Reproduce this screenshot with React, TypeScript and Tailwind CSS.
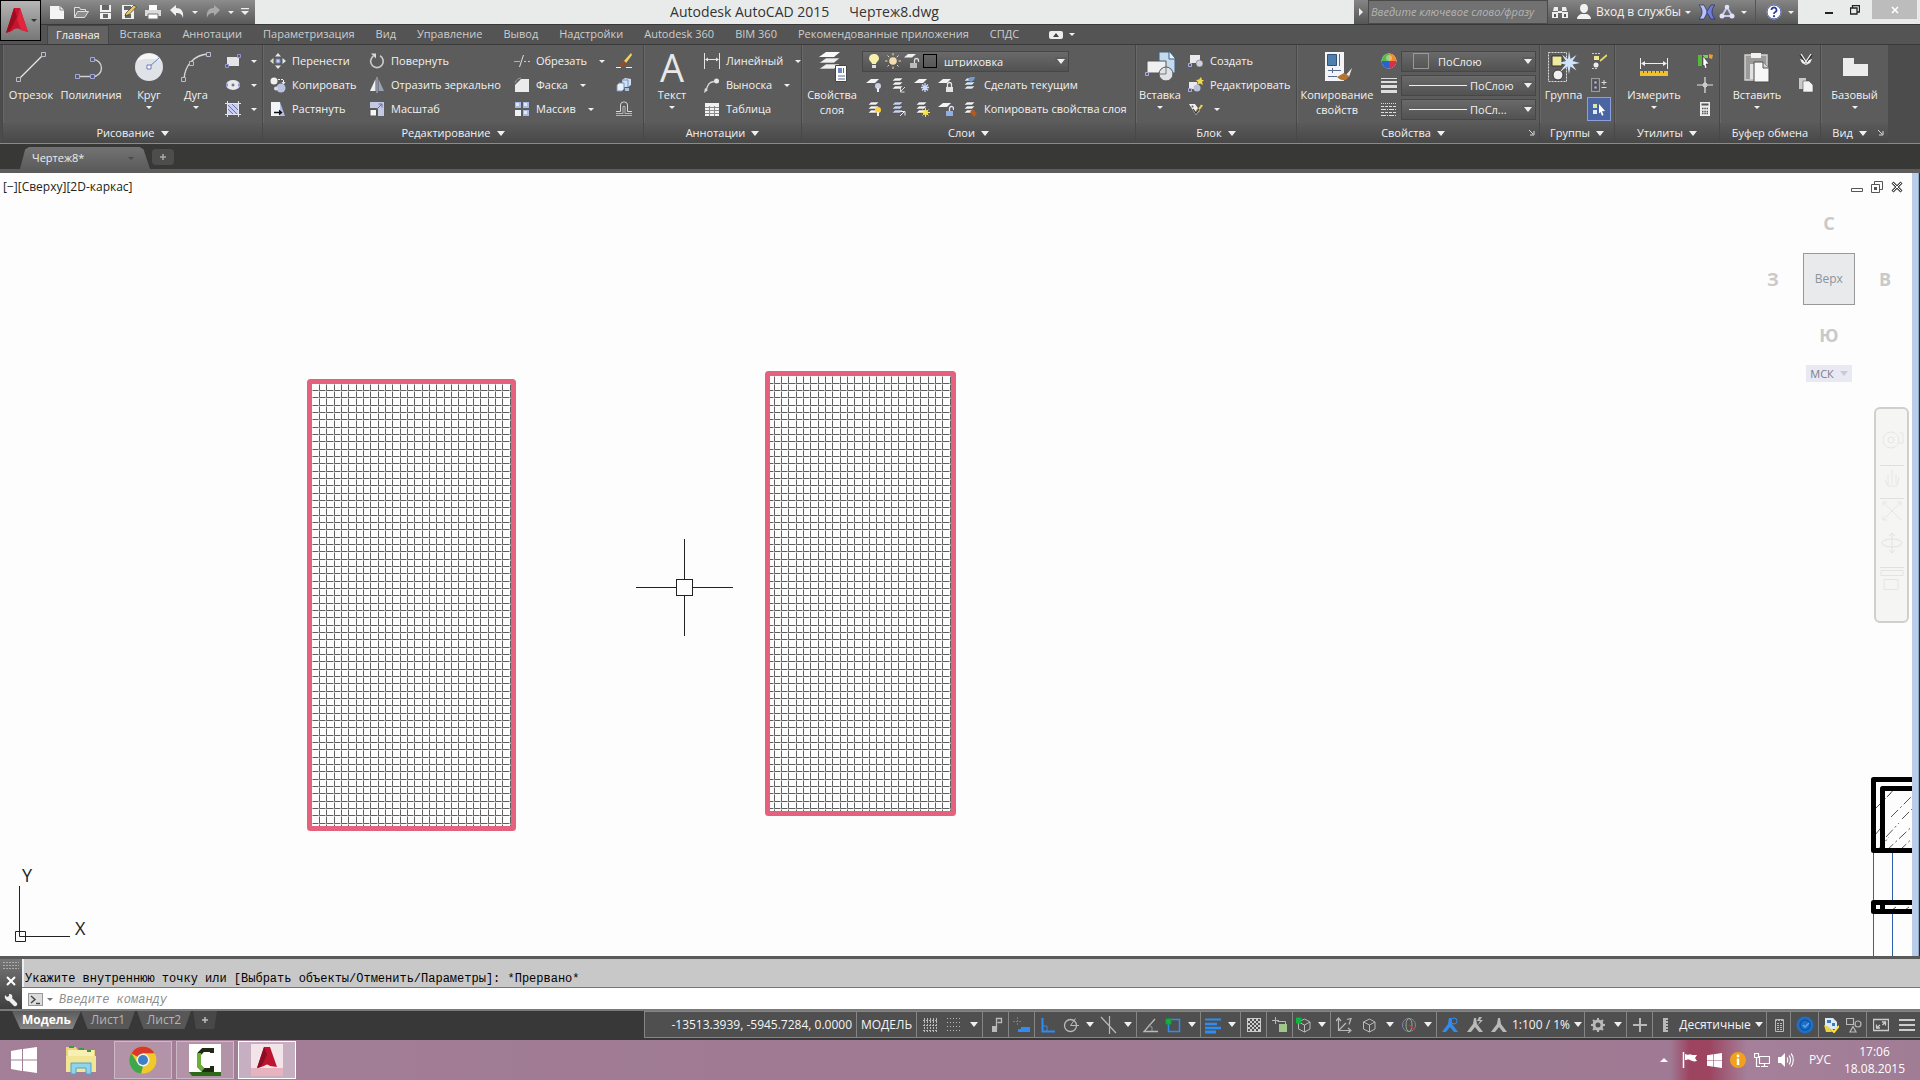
import { type ReactNode } from 'react';

/* ---------- small helpers ---------- */

function Svg({ s = 16, vb, children, className = '' }: { s?: number; vb?: string; children: ReactNode; className?: string }) {
  return (
    <svg width={s} height={s} viewBox={vb || `0 0 ${s} ${s}`} fill="none" className={`shrink-0 ${className}`} aria-hidden="true">
      {children}
    </svg>
  );
}

function Caret({ big = false, color = '#f0f0f0' }: { big?: boolean; color?: string }) {
  return big ? (
    <svg width="8" height="5" viewBox="0 0 8 5" className="shrink-0" aria-hidden="true"><path d="M0 0h8L4 5z" fill={color} /></svg>
  ) : (
    <svg width="6" height="3" viewBox="0 0 6 3" className="shrink-0" aria-hidden="true"><path d="M0 0h6L3 3z" fill={color} /></svg>
  );
}

function BigButton({ label, icon, width, arrow }: { label: string; icon: ReactNode; width: string; arrow?: boolean }) {
  return (
    <button className={`flex shrink-0 flex-col items-center ${width}`}>
      <span className="flex h-9 items-center">{icon}</span>
      <span className="mt-0.5 whitespace-pre-line text-center leading-[15px]">{label}</span>
      {arrow && <span className="mt-1 flex"><Caret /></span>}
    </button>
  );
}

function Tool({ icon, label, arrow }: { icon: ReactNode; label?: string; arrow?: boolean }) {
  return (
    <button className="flex h-6 items-center whitespace-nowrap">
      <span className="flex w-6 shrink-0 justify-center">{icon}</span>
      {label && <span className="ml-0.5">{label}</span>}
      {arrow && <span className={label ? 'ml-3' : 'ml-1.5'}><Caret /></span>}
    </button>
  );
}

function Panel({ title, width, arrow = true, corner, children }: { title: string; width: string; arrow?: boolean; corner?: boolean; children: ReactNode }) {
  return (
    <section className={`flex shrink-0 flex-col border-l border-[#484848] bg-[#5c5c5c] shadow-[inset_1px_0_0_#686868] ${width}`}>
      <div className="flex flex-1 pt-1">{children}</div>
      <div className="flex h-5 items-center bg-linear-to-b from-[#5a5a5a] to-[#484848]">
        <button className="flex flex-1 items-center justify-center gap-1.5 whitespace-nowrap">
          {title}
          {arrow && <Caret big />}
        </button>
        {corner && (
          <button aria-label={`${title}: параметры`} className="pr-1">
            <Svg s={6}><path d="M0 0l4 4M5 1v4H1" stroke="#ddd" /></Svg>
          </button>
        )}
      </div>
    </section>
  );
}

/* ---------- drawing panel ---------- */

const Line32 = (
  <Svg s={32}>
    <path d="M4 28L27 5" stroke="#e6e6e6" strokeWidth="1.3" />
    <path d="M1.500 26.500h4v4h-4zM26.500 1.500h4v4h-4z" fill="#5c5c5c" stroke="#b9bccb" />
  </Svg>
);
const Pline32 = (
  <Svg s={32}>
    <path d="M3 25.500h15a8.500 8.500 0 0 0 0-17h-1" stroke="#cfcfcf" strokeWidth="1.400" />
    <path d="M.5 23.500h4v4h-4zM15.500 23.500h4v4h-4zM15.500 6.500h4v4h-4z" fill="#5c5c5c" stroke="#a3a6dd" />
  </Svg>
);
const Circle32 = (
  <Svg s={32}>
    <circle cx="16" cy="16" r="14" fill="#dfe2e6" />
    <path d="M4 10a13.500 13.500 0 0 1 24 0c-7-3-16-3-24 0z" fill="#f6f6f6" />
    <path d="M16 16l10-9" stroke="#6a80c0" />
    <path d="M14 14h4v4h-4z" fill="#fff" stroke="#6a78c0" />
  </Svg>
);
const Arc32 = (
  <Svg s={32}>
    <path d="M4 28C5 14 14 4 28 3" stroke="#d8d8d8" strokeWidth="1.400" />
    <path d="M1.500 26.500h4v4h-4zM9.500 10.500h4v4h-4zM26.500 1.500h4v4h-4z" fill="#5c5c5c" stroke="#b9bccb" />
  </Svg>
);
const Rect16 = (
  <Svg>
    <path d="M2 4h12v9H2z" fill="#e4e4e8" />
    <path d="M.5 11.500h3v3h-3zM12.500 1.500h3v3h-3z" fill="#5c5c5c" stroke="#8f94e0" />
  </Svg>
);
const Ellipse16 = (
  <Svg>
    <ellipse cx="8" cy="8" rx="7" ry="5" fill="#e6e8ee" />
    <path d="M6.500 8h3M8 6.500v3" stroke="#555" />
    <path d="M1 6.500h2v3H1zM13 6.500h2v3h-2z" fill="#8f94e0" />
  </Svg>
);
const Hatch16 = (
  <Svg>
    <path d="M3 3h10v10H3z" fill="#c9cdf2" />
    <path d="M3 8l5 5M3 4l9 9M7 3l6 6" stroke="#6a70b8" />
    <path d="M2.500 0v16M13.500 0v16M0 2.500h16M0 13.500h16" stroke="#e4e4ee" />
  </Svg>
);

/* ---------- modify panel ---------- */

const Move16 = (
  <Svg>
    <path d="M8 0l3 3.500H5zM8 16l-3-3.500h6zM0 8l3.500-3v6zM16 8l-3.500 3V5z" fill="#e9e9e9" />
    <path d="M6 6h4v4H6z" fill="#c7d4ee" stroke="#6f7fb8" />
    <path d="M1 7h2v2H1z" fill="#d9e07c" />
  </Svg>
);
const Copy16 = (
  <Svg>
    <circle cx="4" cy="4" r="3.500" fill="#f0f0f0" />
    <circle cx="11" cy="11" r="4.500" fill="#b9c2e2" />
    <circle cx="6" cy="11.500" r="2" fill="#d7dbea" />
    <path d="M8 2.500h5.500v3" stroke="#eee" strokeDasharray="2 1" />
    <path d="M11.500 5h4l-2 2.500z" fill="#eee" />
  </Svg>
);
const Stretch16 = (
  <Svg>
    <path d="M1 1h9v14H1z" fill="#f2f4f8" />
    <path d="M10 1l5 14h-5z" fill="#aebfe0" />
    <path d="M4 11.500h6" stroke="#111" strokeWidth="1.500" />
    <path d="M9 8.500l3.500 3L9 14.500z" fill="#111" />
  </Svg>
);
const Rotate16 = (
  <Svg>
    <path d="M11 2.800A6.300 6.300 0 1 1 4.500 3" stroke="#c9c9c9" strokeWidth="1.700" />
    <path d="M2 .5h5v5z" fill="#d9d9d9" />
  </Svg>
);
const Mirror16 = (
  <Svg>
    <path d="M6.500 2v12H1z" fill="#f0f0f0" />
    <path d="M9.500 2v12H15z" fill="#9aa2b4" />
    <path d="M8 0v16" stroke="#b8c0dd" />
  </Svg>
);
const Scale16 = (
  <Svg>
    <path d="M1 1h14v14H9V7H1z" fill="#c3c8e4" />
    <path d="M1 8.500h6.500V15H1z" fill="#f5f5f5" stroke="#555" />
    <path d="M8 8l5-5M9.500 3H13v3.500" stroke="#6670a0" />
  </Svg>
);
const Trim16 = (
  <Svg>
    <path d="M0 8.500h6" stroke="#9db2dd" />
    <path d="M5.500 14l4-12" stroke="#e0e0e0" />
    <path d="M10 8.500h6" stroke="#ccc" strokeDasharray="2 2" />
  </Svg>
);
const Chamfer16 = (
  <Svg>
    <path d="M1 15V8l6-6h8v13z" fill="#ebebeb" />
    <path d="M1 6c1-3 3-5 6-5" stroke="#999" />
  </Svg>
);
const Array16 = (
  <Svg>
    <path d="M1 9h6v6H1z" fill="#eef1f8" />
    <path d="M1 1h6v6H1zM9 1h6v6H9zM9 9h6v6H9z" fill="#a9bbe4" />
    <path d="M2 2h3v3H2zM10 2h3v3h-3zM10 10h3v3h-3z" fill="#dfe8fa" />
  </Svg>
);
const Brush16 = (
  <Svg>
    <path d="M15 0L8 8l2 2 6-8z" fill="#f2d468" />
    <path d="M8 8l2 2c-1 3-4 4-7 3 2-1 2-4 5-5z" fill="#a34a1c" />
    <path d="M0 14.500h5M10 14.500h6" stroke="#eee" />
  </Svg>
);
const Explode16 = (
  <Svg>
    <path d="M6 3l3-2 6 1v6l-3 2H7z" fill="#cfe0f4" />
    <path d="M6 3h6v7" stroke="#7a93b8" />
    <path d="M1 8l2-2h5v6l-2 2H1z" fill="#e9f0fa" stroke="#7a93b8" />
    <path d="M9 11h4v3H9z" fill="#a9c2e4" />
  </Svg>
);
const Offset16 = (
  <Svg>
    <path d="M0 10.500h4.500V4a3 3 0 0 1 3-3h1a3 3 0 0 1 3 3v6.500H16" stroke="#d8d8d8" />
    <path d="M0 14.500h16M0 12.500h7V5.500h2v7h7" stroke="#b4b4bc" />
  </Svg>
);

/* ---------- annotation panel ---------- */

const Dim16 = <Svg><path d="M.5 0v16M15.500 0v16M2 6.500h12" stroke="#e4e4e4" /><path d="M1 6.500l3-2v4zM15 6.500l-3-2v4z" fill="#e4e4e4" /></Svg>;
const Leader16 = (
  <Svg>
    <path d="M2 14C4 6 6 5 10 4.500" stroke="#d5d5d5" strokeWidth="1.300" />
    <circle cx="12.500" cy="4" r="2.500" fill="#e8e8e8" />
    <path d="M0 16l1-5 3 2z" fill="#ddd" />
  </Svg>
);
const Table16 = (
  <Svg>
    <path d="M1 2h14v13H1z" fill="#f1f1f1" />
    <path d="M1 6.500h14M1 9.500h14M1 12.500h14M5.500 5v10M10.500 5v10" stroke="#8a8a8a" />
  </Svg>
);

/* ---------- layers ---------- */

function Sheets({ tint = '#f3f3f3', children }: { tint?: string; children?: ReactNode }) {
  return (
    <Svg>
      <path d="M5 1h8l-3 3H2zM5 5h8l-3 3H2zM5 9h8l-3 3H2z" fill={tint} stroke="#474747" strokeWidth=".5" />
      {children}
    </Svg>
  );
}
function Sheet({ children }: { children?: ReactNode }) {
  return <Svg><path d="M5 2h8l-4 4H0z" fill="#f3f3f3" />{children}</Svg>;
}
const LayerProps32 = (
  <Svg s={32}>
    <path d="M10 1h14l-6 5H3z" fill="#fafafa" />
    <path d="M10 7h14l-6 5H3zM10 13h14l-6 5H3z" fill="#f0f0f0" stroke="#555" strokeWidth=".6" />
    <path d="M19.500 14.500h11v16h-11z" fill="#fff" stroke="#444" />
    <path d="M22 17h4v5h-4z" fill="#6f86bd" />
    <path d="M27.500 17v5M22 25h7M22 28h7" stroke="#5a6a99" />
  </Svg>
);
const LayOff = <Sheet><circle cx="12" cy="9" r="3" fill="#c9cfe6" /><path d="M12 11v4" stroke="#eee" strokeWidth="2" /></Sheet>;
const LayIso = <Sheets><path d="M15 10l-4 4M10.500 11v4h4" stroke="#ddd" /></Sheets>;
const LayFrz = <Sheet><path d="M11 6v9M7 10.500h8M8 7.500l6 6M14 7.500l-6 6" stroke="#c9dcff" strokeWidth="1.300" /></Sheet>;
const LayLock = <Sheet><path d="M8 10h7v5H8z" fill="#e4e4e4" /><path d="M9.500 10V7.500a2 2 0 0 1 4 0V10" stroke="#e4e4e4" strokeWidth="1.300" /></Sheet>;
const LayCur = <Sheets tint="#dbe8f5"><path d="M8 0l5 0-1 3-3 2-3-2z" fill="#6f9ccf" /></Sheets>;
const LayOn = <Sheets><circle cx="12" cy="9" r="3" fill="#ffd23c" /><path d="M12 11v4" stroke="#eee" strokeWidth="2" /></Sheets>;
const LayUniso = <Sheets tint="#c8d4ec"><path d="M10 15l4-4M11 10.500h4v4" stroke="#eee" /></Sheets>;
const LayThaw = <Sheets><circle cx="11.500" cy="11.500" r="2.500" fill="#fff04a" /><path d="M11.500 7v9M7 11.500h9M8.500 8.500l6 6M14.500 8.500l-6 6" stroke="#f5e648" /></Sheets>;
const LayUnlock = <Sheet><path d="M8 10h7v5H8z" fill="#8fb0e4" /><path d="M11.500 10V7.500a2 2 0 0 1 4 0V9" stroke="#dce6f8" strokeWidth="1.300" /></Sheet>;
const LayMatch = <Sheets><path d="M8 11l3-3 4 5-3 3z" fill="#b4591f" /></Sheets>;

/* ---------- block, properties, groups, utils, clipboard ---------- */

const Insert32 = (
  <Svg s={32}>
    <path d="M15 1h11l5 6v15H15z" fill="#c3dbef" stroke="#3c5f80" />
    <path d="M25 1v7h6" fill="#eaf4fc" stroke="#3c5f80" />
    <path d="M3 10h19v12H3z" fill="#f0f0f3" stroke="#555" />
    <circle cx="22" cy="23" r="7" fill="#e0e2e6" stroke="#555" />
    <path d="M22 16v7h-7" stroke="#777" />
    <path d="M1.500 21.500h3v3h-3z" fill="#5c5c5c" stroke="#a9adea" />
  </Svg>
);
const BlockNew = (
  <Svg>
    <path d="M2 2h10v8H2z" fill="#e9e9ee" />
    <circle cx="11.500" cy="10.500" r="3.500" fill="#cfd2dc" stroke="#555" strokeWidth=".5" />
    <path d="M.5 10.500h3v3h-3z" stroke="#a9adea" />
  </Svg>
);
const BlockEdit = (
  <Svg>
    <path d="M1 5h8v7H1z" fill="#e9e9ee" />
    <circle cx="9" cy="11" r="3.500" fill="#b9c2dc" />
    <path d="M.5 11.500h3v3h-3z" stroke="#a9adea" />
    <path d="M13 0l1 3h2l-2 2 1 3-3-1.500L9 8l1-3-2-2 3-.5z" fill="#f0d84e" />
  </Svg>
);
const Attr16 = (
  <Svg>
    <path d="M1 3l6 0 5 7-4 4z" fill="#efefef" />
    <circle cx="4.500" cy="5.500" r="1" fill="#555" />
    <path d="M7 12l6-9 2.500 1.500L9 13z" fill="#e6cf6a" stroke="#444" strokeWidth=".6" />
    <path d="M5 8l3 4 3-4" stroke="#333" strokeWidth="1.200" />
  </Svg>
);
const Match32 = (
  <Svg s={32}>
    <path d="M4 1h19v29H4z" fill="#f3f4f7" />
    <path d="M6.500 3.500h9v11h-9z" fill="#4f7fae" stroke="#2f5276" />
    <path d="M18.500 3v12M7 19.500h13M7 25.500h9M11.500 17v5" stroke="#5a6a88" />
    <path d="M31 17l-6 7 3 2z" fill="#eee" />
    <path d="M16 26l7-4 5 3c-2 5-7 6-12 1z" fill="#b3752f" />
  </Svg>
);
const Wheel16 = (
  <Svg>
    <circle cx="8" cy="8" r="7.500" fill="#f3f3f3" />
    <path d="M8 8L8 .5A7.500 7.500 0 0 1 15.500 8z" fill="#f08a2e" />
    <path d="M8 8h7.500A7.500 7.500 0 0 1 8 15.500z" fill="#d6304a" />
    <path d="M8 8v7.500A7.500 7.500 0 0 1 .5 8z" fill="#2b62d0" />
    <path d="M8 8H.5A7.500 7.500 0 0 1 8 .5z" fill="#5cb84a" />
    <circle cx="8" cy="5" r="3" fill="#fff" opacity=".35" />
  </Svg>
);
const Weight16 = <Svg><path d="M0 1.500h16" stroke="#ddd" /><path d="M0 5h16" stroke="#ddd" strokeWidth="2" /><path d="M0 9.500h16M0 14.500h16" stroke="#ddd" strokeWidth="3" /></Svg>;
const Ltype16 = <Svg><path d="M0 2.500h16" stroke="#ddd" strokeDasharray="1 1" /><path d="M0 5.500h16M0 11.500h16" stroke="#ddd" strokeDasharray="3 1" /><path d="M0 8.500h16M0 14.500h16" stroke="#ddd" strokeDasharray="5 1 1 1" /></Svg>;
const Group32 = (
  <Svg s={32}>
    <path d="M.5 1.500h18v29H.5z" stroke="#ddd" strokeDasharray="2 1" />
    <path d="M4 5h10v10H4z" fill="#efeb9a" stroke="#333" />
    <circle cx="10" cy="24" r="5" fill="#f0f0f0" stroke="#333" />
    <path d="M13 20l5-6" stroke="#eee" />
    <path d="M21 0l1.500 8 6-4-4 6 8 2-8 1.500 4 6-6-4L21 23l-1.500-7.500-6 4 4-6L10 12l8-2-4-6 6 4z" fill="#cfe4fb" />
  </Svg>
);
const Ungroup16 = <Svg><path d="M1 .5h9M1 15.500h6" stroke="#ccc" strokeDasharray="2 1" /><path d="M3 3h5v4H3z" fill="#eee98f" /><circle cx="5" cy="12" r="2.500" fill="#eee" /><path d="M9 8l7-6" stroke="#e8d56a" strokeWidth="1.800" /></Svg>;
const GroupEdit16 = <Svg><path d="M.5 1.500h8v13h-8z" stroke="#ddd" strokeDasharray="1 1" /><path d="M3 4h3v3H3zM3 9h3v3H3z" fill="#b7b8f0" stroke="#333" strokeWidth=".6" /><path d="M13 3v5M10.500 5.500h5M10.500 10.500h5" stroke="#ddd" /></Svg>;
const GroupSel16 = <Svg><path d="M2 3h4v4H2z" fill="#d9e8a0" /><path d="M2 9h4v4H2z" fill="#dfe9ff" /><path d="M8 3l6 7-3 .2L12.500 14l-1.500.7L9.500 11 8 12.500z" fill="#fff" /></Svg>;
const Measure32 = (
  <Svg s={32}>
    <path d="M2.500 7v11M29.500 7v11M4 12.500h24" stroke="#eee" />
    <path d="M3 12.500l4-2.500v5zM29 12.500l-4-2.500v5z" fill="#eee" />
    <path d="M2 20h28v5H2z" fill="#efc12f" />
    <path d="M5.500 20v2M9.500 20v2M13.500 20v2M17.500 20v2M21.500 20v2M25.500 20v2" stroke="#7a5a00" />
  </Svg>
);
const QSel16 = <Svg><path d="M1 2h4v11H1z" fill="#58b83a" /><path d="M6 2h5v3H8v8H6z" fill="#7ccf58" /><path d="M12 1l4 1-1 4-3-1z" fill="#f59a2d" /><path d="M6 3l6 8H9l1 4-2 .5L7 12l-1 1z" fill="#fff" stroke="#222" strokeWidth=".5" /></Svg>;
const Point16 = <Svg><path d="M8 0v16M0 8h16" stroke="#e4e4e4" strokeWidth="1.200" /><circle cx="8" cy="8" r="2" stroke="#e4e4e4" /></Svg>;
const Calc16 = <Svg><path d="M3 1h10v14H3z" fill="#ececec" /><path d="M4.500 2.500h7v2h-7z" fill="#555" /><path d="M5 7.500h6M5 10.500h6M5 12.500h6" stroke="#555" strokeDasharray="1.500 .8" strokeWidth="1.500" /></Svg>;
const Paste32 = (
  <Svg s={32}>
    <path d="M4 4h22v25H4z" fill="#9b9a98" stroke="#d4d4d4" strokeWidth="1.400" />
    <path d="M10 2h10v5H10z" fill="#f1f1f1" />
    <path d="M9 13h9v15H9z" fill="#e2e2e2" />
    <path d="M13 11h9l6 6v14H13z" fill="#f7f7f7" stroke="#4a4a4a" />
    <path d="M22 11v6h6" fill="#d5d5d5" stroke="#555" />
  </Svg>
);
const Cut16 = <Svg><path d="M2 2l6 8 6-8" stroke="#2e2e2e" strokeWidth="1.400" /><path d="M2 6l3 1 3 4 3-4 3-1-2 4-4 2-4-2z" fill="#f2f2f2" /><path d="M3 1l6 9M13 1L7 10" stroke="#f2f2f2" strokeWidth="1.300" /></Svg>;
const CopyClip16 = <Svg><path d="M1 1h7v11H1z" fill="#c9c9c9" /><path d="M5 4h6l4 4v7H5z" fill="#f3f3f3" stroke="#555" strokeWidth=".6" /></Svg>;
const Base32 = <Svg s={32}><path d="M4 7h11v6h14v12H4z" fill="#ececec" /></Svg>;

/* ---------- title bar ---------- */

const tabs = ['Вставка', 'Аннотации', 'Параметризация', 'Вид', 'Управление', 'Вывод', 'Надстройки', 'Autodesk 360', 'BIM 360', 'Рекомендованные приложения', 'СПДС'];

const quick: { label: string; icon: ReactNode }[] = [
  { label: 'Новый', icon: <Svg><path d="M1 2h10l4 4v9H1z" fill="#f4f4f4" /><path d="M11 2v4h4" stroke="#888" /></Svg> },
  { label: 'Открыть', icon: <Svg><path d="M1.500 13V3.500h5l1 2h5V8" stroke="#e0e0e0" /><path d="M1.500 13.500l3-6h11l-4 6z" fill="#8d8d8d" stroke="#e0e0e0" /></Svg> },
  { label: 'Сохранить', icon: <Svg><path d="M3 1h11v14H3z" fill="#f1f1f1" /><path d="M5 1h7v5H5zM6 10h5v4H6z" fill="#666" /><path d="M3 8.500h11" stroke="#777" /></Svg> },
  { label: 'Сохранить как', icon: <Svg><path d="M1 1h12v14H1z" fill="#f1f1f1" /><path d="M3 2h7v4H3zM4 10h6v4H4z" fill="#666" /><path d="M5 9l8-8 2.500 2L8 10.500 4 12z" fill="#e9c75a" stroke="#333" strokeWidth=".7" /></Svg> },
  { label: 'Печать', icon: <Svg><path d="M4 1h8v5H4z" fill="#fff" /><path d="M0 6h16v6H0z" fill="#dcdcdc" /><path d="M3 10h10v5H3z" fill="#fff" stroke="#777" /></Svg> },
  { label: 'Отменить', icon: <Svg><path d="M1 6l6-5v3c5 0 8 3 7 10-1-4-3-5-7-5v3z" fill="#f0f0f0" /></Svg> },
];

function TitleBar() {
  return (
    <header className="flex h-11 shrink-0 bg-[#545454]">
      <button aria-label="Меню приложения" className="flex h-[41px] w-[41px] shrink-0 items-center border border-black bg-linear-to-b from-[#b5b5b5] to-[#777]">
        <svg width="28" height="28" viewBox="0 0 28 28" className="ml-0.5" aria-hidden="true">
          <path d="M11 1h6l8 24-7-2c-3-2-6-2-9 1l-6 2z" fill="#c8142c" />
          <path d="M11 1l-8 25 4-2 7-14z" fill="#9e0c20" />
          <path d="M17 1l8 24-7-2-4-11z" fill="#e0263c" />
        </svg>
        <Caret color="#333" />
      </button>
      <div className="flex min-w-0 flex-1 flex-col">
        <div className="flex h-6 bg-[#e9ebea]">
          <div className="flex w-[214px] shrink-0 items-center bg-linear-to-b from-[#8c8c8c] to-[#5a5a5a] pl-1">
            {quick.map((q) => (
              <button key={q.label} aria-label={q.label} className="flex w-6 justify-center">{q.icon}</button>
            ))}
            <button aria-label="Список отмены" className="flex w-3 justify-center"><Caret /></button>
            <button aria-label="Повторить" className="flex w-6 justify-center">
              <Svg><path d="M15 6L9 1v3C4 4 1 7 2 14c1-4 3-5 7-5v3z" fill="#a9a9a9" /></Svg>
            </button>
            <button aria-label="Список повтора" className="flex w-3 justify-center"><Caret /></button>
            <button aria-label="Настройка панели" className="flex w-4 justify-center">
              <Svg s={8}><path d="M0 .5h8" stroke="#eee" strokeWidth="1.500" /><path d="M0 3h8L4 7z" fill="#eee" /></Svg>
            </button>
          </div>
          <h1 className="flex min-w-0 flex-1 items-center justify-center gap-5 whitespace-nowrap text-sm text-[#333]">
            <span>Autodesk AutoCAD 2015</span>
            <span>Чертеж8.dwg</span>
          </h1>
          <div className="flex shrink-0 bg-linear-to-b from-[#858585] to-[#565656]">
            <button aria-label="Свернуть поиск" className="flex w-3.5 items-center justify-center">
              <Svg s={8}><path d="M2 0v8l4-4z" fill="#eee" /></Svg>
            </button>
            <input aria-label="Поиск" placeholder="Введите ключевое слово/фразу" className="w-[180px] border border-[#4a4a4a] bg-[#717171] px-0.5 text-[11px] italic placeholder:text-[#b4b4b4]" />
            <button aria-label="Найти" className="flex w-6 items-center justify-center">
              <Svg><path d="M2 3h4v4H1zM10 3h4l1 4h-5zM0 8h6v6H0zM10 8h6v6h-6z" fill="#eee" /><path d="M6 8h4" stroke="#eee" strokeWidth="2" /><path d="M2 10h2v3H2zM12 10h2v3h-2z" fill="#555" /></Svg>
            </button>
            <button className="flex items-center whitespace-nowrap text-[#f2f2f2]">
              <span className="flex w-6 justify-center">
                <Svg><path d="M8 0c3 0 4 2 4 4.500S10 9 8 9 4 7 4 4.500 5 0 8 0zM1 15c0-3 3-5 5-5h4c2 0 5 2 5 5z" fill="#f2f2f2" /></Svg>
              </span>
              <span className="mr-1">Вход в службы</span>
              <Caret />
            </button>
            <button aria-label="Exchange" className="ml-1 flex w-6 items-center justify-center">
              <Svg><path d="M0 1h5l3.500 7L5 15H0c4-4 4-10 0-14z" fill="#b9c3f5" stroke="#222a66" strokeWidth=".7" /><path d="M16 1h-4L7.500 8l4.500 7h4c-4-4-4-10 0-14z" fill="#6f7fd8" stroke="#222a66" strokeWidth=".7" /></Svg>
            </button>
            <button aria-label="Autodesk 360" className="flex items-center">
              <Svg><path d="M8 3l5 9H3z" stroke="#c5c9ef" strokeWidth="2" /><circle cx="8" cy="3" r="2.300" fill="#dfe2fa" /><circle cx="3" cy="12" r="2.500" fill="#dfe2fa" /><circle cx="13" cy="12" r="2.500" fill="#dfe2fa" /></Svg>
              <span className="ml-1.5"><Caret /></span>
            </button>
            <button aria-label="Справка" className="ml-2 flex items-center border-l border-[#555] pl-2.5 pr-1">
              <Svg><circle cx="8" cy="8" r="7.500" fill="#fff" /><circle cx="8" cy="8" r="7" stroke="#3a4da0" /><path d="M5.500 6a2.500 2.500 0 1 1 3.500 2.300c-.8.400-1 .7-1 1.700" stroke="#2b3f9c" strokeWidth="1.800" /><circle cx="8" cy="12.200" r="1.100" fill="#2b3f9c" /></Svg>
              <span className="ml-1.5"><Caret /></span>
            </button>
          </div>
          <div className="flex w-[122px] shrink-0">
            <button aria-label="Свернуть" className="flex flex-1 items-center justify-end pr-1"><Svg s={8}><path d="M0 5h8" stroke="#222" strokeWidth="2" /></Svg></button>
            <button aria-label="Восстановить" className="flex flex-1 items-center justify-center pb-1"><Svg s={10}><path d="M.5 3h6.500v6H.5zM2.500 3V.500h7v6.500H7" stroke="#222" strokeWidth="1.300" /></Svg></button>
            <button aria-label="Закрыть" className="mr-[3px] flex h-[19px] w-[45px] items-center justify-center bg-[#bcbcbc]"><Svg s={8}><path d="M1 1l6 6M7 1L1 7" stroke="#fff" strokeWidth="1.600" /></Svg></button>
          </div>
        </div>
        <nav className="flex h-5 items-stretch whitespace-nowrap border-t border-[#383838] bg-[#545454] pl-1.5 text-[11px] text-[#cdcdcd]">
          <button className="border border-b-0 border-[#454545] bg-[#626262] px-2 text-[#f2f2f2]">Главная</button>
          {tabs.map((t) => (
            <button key={t} className="ml-px px-2.5">{t}</button>
          ))}
          <button aria-label="Свернуть ленту" className="ml-5 flex items-center gap-1.5">
            <Svg s={14}><rect y="3" width="14" height="8" rx="2" fill="#eee" /><path d="M4 9l3-4 3 4z" fill="#444" /></Svg>
            <Caret />
          </button>
        </nav>
      </div>
    </header>
  );
}

/* ---------- ribbon ---------- */

const selectBox = 'h-[21px] w-full cursor-default appearance-none border border-[#474747] bg-linear-to-b from-[#6a6a6a] to-[#525252] leading-none';

function PropSelect({ label, value, line }: { label: string; value: string; line?: boolean }) {
  return (
    <div className="relative flex h-6 items-center">
      <select aria-label={label} className={`${selectBox} ${line ? 'pl-[68px]' : 'pl-9'}`}>
        <option>{value}</option>
      </select>
      {line ? (
        <span className="pointer-events-none absolute left-2 h-px w-[58px] bg-[#eee]" />
      ) : (
        <span className="pointer-events-none absolute left-3 size-4 border border-[#999]" />
      )}
      <span className="pointer-events-none absolute right-0.5 flex items-center bg-[#5c5c5c] p-0.5"><Caret big /></span>
    </div>
  );
}

function Ribbon() {
  return (
    <div className="flex h-[100px] shrink-0 border-b border-[#8a8a8a] border-t border-t-[#3a3a3a] bg-[#4c4c4c] pl-0.5 text-[11px] text-[#f2f2f2]">
      <Panel title="Рисование" width="w-[260px]">
        <BigButton label="Отрезок" width="w-14" icon={Line32} />
        <BigButton label="Полилиния" width="w-16" icon={Pline32} />
        <BigButton label="Круг" width="w-[52px]" icon={Circle32} arrow />
        <BigButton label="Дуга" width="w-[42px]" icon={Arc32} arrow />
        <div className="ml-1">
          <Tool icon={Rect16} arrow />
          <Tool icon={Ellipse16} arrow />
          <Tool icon={Hatch16} arrow />
        </div>
      </Panel>
      <Panel title="Редактирование" width="w-[381px]">
        <div className="ml-[3px] w-[99px]">
          <Tool icon={Move16} label="Перенести" />
          <Tool icon={Copy16} label="Копировать" />
          <Tool icon={Stretch16} label="Растянуть" />
        </div>
        <div className="w-[145px]">
          <Tool icon={Rotate16} label="Повернуть" />
          <Tool icon={Mirror16} label="Отразить зеркально" />
          <Tool icon={Scale16} label="Масштаб" />
        </div>
        <div className="w-[102px]">
          <Tool icon={Trim16} label="Обрезать" arrow />
          <Tool icon={Chamfer16} label="Фаска" arrow />
          <Tool icon={Array16} label="Массив" arrow />
        </div>
        <div>
          <Tool icon={Brush16} />
          <Tool icon={Explode16} />
          <Tool icon={Offset16} />
        </div>
      </Panel>
      <Panel title="Аннотации" width="w-[158px]">
        <BigButton
          label="Текст"
          width="w-[56px]"
          arrow
          icon={<span aria-hidden="true" className="text-[38px] leading-9 text-[#e8e8e8]">A</span>}
        />
        <div>
          <Tool icon={Dim16} label="Линейный" arrow />
          <Tool icon={Leader16} label="Выноска" arrow />
          <Tool icon={Table16} label="Таблица" />
        </div>
      </Panel>
      <Panel title="Слои" width="w-[334px]">
        <BigButton label={'Свойства\nслоя'} width="w-[60px]" icon={LayerProps32} />
        <div>
          <div className="relative flex h-6 w-[207px] items-center">
            <select aria-label="Слой" className={`${selectBox} pl-[81px]`}>
              <option>штриховка</option>
            </select>
            <span className="pointer-events-none absolute left-1 flex items-center gap-[3px]">
              <Svg><path d="M8 1c3 0 5 2 5 4.500S10 9 10 11H6C6 9 3 8 3 5.500S5 1 8 1z" fill="#f6f0a8" /><path d="M6 12h4v3H6z" fill="#ddd" /></Svg>
              <Svg><circle cx="8" cy="8" r="3.800" fill="#f1ddb0" /><path d="M8 0v16M0 8h16M2.500 2.500l11 11M13.500 2.500l-11 11" stroke="#e8d9b8" strokeDasharray="2.500 11" /></Svg>
              <Svg><path d="M4 1h8L8 4.500H0z" fill="#f2f2f2" /><path d="M6 10h7v5H6z" fill="#bbb" /><path d="M10.500 10V7.500a2 2 0 0 1 4 0V9" stroke="#ddd" strokeWidth="1.300" /></Svg>
              <span className="size-3.5 border border-black" />
            </span>
            <span className="pointer-events-none absolute right-0.5 flex items-center bg-[#5c5c5c] p-0.5"><Caret big /></span>
          </div>
          <div className="flex">
            <Tool icon={LayOff} /><Tool icon={LayIso} /><Tool icon={LayFrz} /><Tool icon={LayLock} />
            <Tool icon={LayCur} label="Сделать текущим" />
          </div>
          <div className="flex">
            <Tool icon={LayOn} /><Tool icon={LayUniso} /><Tool icon={LayThaw} /><Tool icon={LayUnlock} />
            <Tool icon={LayMatch} label="Копировать свойства слоя" />
          </div>
        </div>
      </Panel>
      <Panel title="Блок" width="w-[161px]">
        <BigButton label="Вставка" width="w-[48px]" icon={Insert32} arrow />
        <div>
          <Tool icon={BlockNew} label="Создать" />
          <Tool icon={BlockEdit} label="Редактировать" />
          <Tool icon={Attr16} arrow />
        </div>
      </Panel>
      <Panel title="Свойства" width="w-[243px]" corner>
        <BigButton label={'Копирование\nсвойств'} width="w-[80px]" icon={Match32} />
        <div>
          <Tool icon={Wheel16} />
          <Tool icon={Weight16} />
          <Tool icon={Ltype16} />
        </div>
        <div className="w-[135px]">
          <PropSelect label="Цвет" value="ПоСлою" />
          <PropSelect label="Вес линий" value="ПоСлою" line />
          <PropSelect label="Тип линий" value="ПоСл..." line />
        </div>
      </Panel>
      <Panel title="Группы" width="w-[75px]">
        <BigButton label="Группа" width="w-[47px]" icon={Group32} />
        <div>
          <Tool icon={Ungroup16} />
          <Tool icon={GroupEdit16} />
          <div className="border border-[#8ba0d8] bg-[#4a64a4] [&>button]:h-[22px] [&>button>span]:w-[22px]"><Tool icon={GroupSel16} /></div>
        </div>
      </Panel>
      <Panel title="Утилиты" width="w-[105px]">
        <BigButton label="Измерить" width="w-[78px]" icon={Measure32} arrow />
        <div>
          <Tool icon={QSel16} />
          <Tool icon={Point16} />
          <Tool icon={Calc16} />
        </div>
      </Panel>
      <Panel title="Буфер обмена" width="w-[101px]" arrow={false}>
        <BigButton label="Вставить" width="w-[74px]" icon={Paste32} arrow />
        <div>
          <Tool icon={Cut16} />
          <Tool icon={CopyClip16} />
        </div>
      </Panel>
      <Panel title="Вид" width="w-[68px]" corner>
        <BigButton label="Базовый" width="w-full" icon={Base32} arrow />
      </Panel>
    </div>
  );
}

/* ---------- drawing area ---------- */

const PITCH = 22 / 3;

// net hatch: every cell is an L with small gaps at the far ends
function hatchPath(x1: number, y1: number, x2: number, y2: number) {
  let d = '';
  const k0 = Math.floor((x1 - 319) / PITCH);
  const r0 = Math.floor((y1 - 217) / PITCH);
  for (let r = r0; 217 + r * PITCH < y2 + PITCH; r++) {
    const y = Math.round(217 + r * PITCH) + 0.5;
    const prev = Math.round(217 + (r - 1) * PITCH) + 0.5;
    for (let k = k0; 319 + k * PITCH < x2; k++) {
      const x = Math.round(319 + k * PITCH) + 0.5;
      const next = Math.round(319 + (k + 1) * PITCH) + 0.5;
      // no vertical right against the left border
      d += x < x1 + 2 ? `M${x} ${y}H${next - 1}` : `M${x} ${prev + 1}V${y}H${next - 1}`;
    }
  }
  return d;
}

const shapes = [
  { id: 'a', x: 307, y: 206, w: 209, h: 452 },
  { id: 'b', x: 765, y: 198, w: 191, h: 445 },
];

function Canvas() {
  return (
    <main className="relative min-h-0 flex-1 overflow-hidden border-r border-[#0d3a44] bg-[#fdfdfd]">
      <svg className="absolute inset-0 size-full" aria-hidden="true">
        {shapes.map((s) => (
          <g key={s.id}>
            <clipPath id={`clip-${s.id}`}>
              <rect x={s.x + 5} y={s.y + 5} width={s.w - 10} height={s.h - 10} />
            </clipPath>
            <path d={hatchPath(s.x + 5, s.y + 5, s.x + s.w - 5, s.y + s.h - 5)} fill="none" stroke="#5e5e5e" clipPath={`url(#clip-${s.id})`} />
            <rect x={s.x + 2.5} y={s.y + 2.5} width={s.w - 5} height={s.h - 5} rx="1" fill="none" stroke="#e4627d" strokeWidth="5" />
          </g>
        ))}
        {/* crosshair */}
        <path d="M636 414.500h40M693 414.500h40M684.500 366v40M684.500 423v40" stroke="#222" />
        <rect x="676.500" y="406.500" width="16" height="16" fill="none" stroke="#222" />
      </svg>

      {/* UCS icon */}
      <svg width="110" height="110" className="absolute bottom-0 left-0" aria-hidden="true">
        <path d="M19.500 40v46M25 90.500h45" stroke="#222" />
        <path d="M19.500 86v4.500H25M15.500 85.500h10v10h-10z" fill="none" stroke="#222" />
        <text x="22" y="36" fontSize="18" fill="#222" className="font-['Open_Sans',sans-serif]">Y</text>
        <text x="75" y="89" fontSize="18" fill="#222" className="font-['Open_Sans',sans-serif]">X</text>
      </svg>

      {/* part of the neighbouring plan */}
      <svg width="48" height="179" className="absolute bottom-0 right-0" aria-hidden="true">
        <path d="M16 20L26 9M4 32l16-16M4 58l10-12M15 60l13-14M31 42l10-10M6 74l12-14M15 74l34-32M28 74l21-20M20 40l28-28M38 74l10-9" stroke="#555" strokeDasharray="10 3 2 3" />
        <path d="M17 136l8-6M30 136l8-6M42 136l6-5" stroke="#555" />
        <path d="M50 2.500H2.500v71H50M50 11.500H11.500V73M50 125.500H2.500v9H50M11.500 125v10" fill="none" stroke="#000" strokeWidth="5" strokeLinejoin="round" />
        <path d="M2.500 76v47M21.500 76v47M2.500 137v42M21.500 137v42" stroke="#2f5fae" />
      </svg>

      <div className="absolute left-[3px] top-1.5 flex text-xs leading-4 text-[#222]">
        <button>[−]</button>
        <button>[Сверху]</button>
        <button>[2D-каркас]</button>
      </div>

      <div className="absolute right-4 top-2 flex gap-2">
        <button aria-label="Свернуть вид"><Svg s={12}><path d="M.5 7.500h11v3H.5z" stroke="#555" /></Svg></button>
        <button aria-label="Восстановить вид"><Svg s={12}><path d="M.5 3.500h8v8h-8zM3.500 3V.500h8v8H9" stroke="#555" /><path d="M3 6h3v3H3z" fill="#555" /></Svg></button>
        <button aria-label="Закрыть вид"><Svg s={12}><path d="M1.500 1.500l9 9M10.500 1.500l-9 9" stroke="#444" strokeWidth="3" /><path d="M2 2l8 8M10 2l-8 8" stroke="#fff" /></Svg></button>
      </div>

      {/* view cube */}
      <div className="absolute right-[26px] top-10 flex w-[128px] flex-col items-center leading-5 text-[#c9c9c9]">
        <button className="h-5 text-lg font-bold leading-5">С</button>
        <div className="mt-5 flex w-full items-center justify-between px-0.5">
          <button className="text-lg font-bold">З</button>
          <button className="size-[52px] border border-[#999] bg-[#e9eaec] text-xs text-[#8b949c]">Верх</button>
          <button className="text-lg font-bold">В</button>
        </div>
        <button className="mt-5 h-5 text-lg font-bold leading-5">Ю</button>
        <button className="mt-5 flex h-[17px] items-center gap-1.5 bg-[#e9e9f4] px-1 text-[11px] text-[#7c7c88]">
          МСК
          <Caret big color="#c9c9d6" />
        </button>
      </div>

      {/* navigation bar */}
      <div className="absolute right-2.5 top-[234px] flex h-[216px] w-[35px] flex-col items-center rounded-md border-2 border-[#cfcfcb] bg-[#f5f5f4] pt-5">
        <button aria-label="Штурвал"><Svg s={24}><circle cx="11" cy="11" r="8" stroke="#e6e6e6" /><circle cx="11" cy="11" r="3" stroke="#e6e6e6" /><path d="M19 4h4v10h-4" stroke="#e6e6e6" /></Svg></button>
        <button aria-label="Панорамирование" className="mt-3 border-t border-[#e0e0e0]"><Svg s={24}><path d="M8 20V8m4 10V4m4 14V8M5 14l3 6h9l2-9" stroke="#e6e6e6" /></Svg></button>
        <button aria-label="Зумирование" className="mt-2 border-t border-[#e0e0e0]"><Svg s={24}><path d="M3 3l18 18M21 3L3 21M3 7V3h4M21 7V3h-4M3 17v4h4" stroke="#e6e6e6" /></Svg></button>
        <button aria-label="Орбита" className="mt-2"><Svg s={24}><path d="M12 2v20M9 5l3-3 3 3M9 19l3 3 3-3" stroke="#e2e2e2" /><ellipse cx="12" cy="12" rx="10" ry="4" stroke="#e2e2e2" /></Svg></button>
        <button aria-label="Аниматор" className="mt-3 border-t border-[#e0e0e0]"><Svg s={24}><path d="M1 2.500h22v5H1zM4 11.500h14v10H4z" stroke="#e4e4e4" /></Svg></button>
      </div>

      <div className="absolute inset-y-0 right-0 w-[7px] border-r border-[#8fa9c4] bg-[#b9cdea]" />
    </main>
  );
}

/* ---------- command line ---------- */

function CommandLine() {
  return (
    <div className="flex h-[55px] shrink-0 border-b-2 border-t-[3px] border-b-[#7a7a7a] border-t-[#5a5a5a] bg-[#555]">
      <div className="flex w-[22px] shrink-0 flex-col items-center justify-between bg-linear-to-b from-[#777] to-[#3f3f3f] py-0.5">
        <svg width="16" height="8" className="shrink-0" aria-hidden="true"><path d="M0 1.500h16M0 4.500h16M0 7.500h16" stroke="#aaa" strokeDasharray="2 1" /></svg>
        <button aria-label="Закрыть строку"><Svg s={10}><path d="M1 1l8 8M9 1L1 9" stroke="#fff" strokeWidth="2" /></Svg></button>
        <button aria-label="Адаптация"><Svg s={14}><path d="M1 2l2 2 2-1V1c3 0 4 2 3 4l5 5c1 2-1 4-3 3L5 8C3 8 0 6 1 2z" fill="#eee" /></Svg></button>
      </div>
      <div className="flex min-w-0 flex-1 flex-col font-['Liberation_Mono',monospace] text-xs">
        <p className="h-7 whitespace-nowrap border-l-2 border-[#eee] bg-[#c8c8c8] pl-px pt-3 leading-4 text-black">
          Укажите внутреннюю точку или [Выбрать объекты/Отменить/Параметры]: *Прервано*
        </p>
        <div className="flex flex-1 items-center border-t border-[#777] bg-white pl-1.5 pt-0.5">
          <button aria-label="Последние команды" className="flex items-center gap-1">
            <Svg s={15}><rect x=".5" y="1.500" width="14" height="12" fill="#dcdcdc" stroke="#999" /><path d="M3 4l4 3.500L3 11M8 11.500h4" stroke="#444" strokeWidth="1.400" /></Svg>
            <Caret color="#777" />
          </button>
          <input aria-label="Команда" placeholder="Введите команду" className="ml-1.5 min-w-0 flex-1 italic outline-none placeholder:text-[#8e8e8e]" />
        </div>
      </div>
    </div>
  );
}

/* ---------- status bar ---------- */

function St({ label, w = 'w-[26px]', sep, children }: { label: string; w?: string; sep?: boolean; children: ReactNode }) {
  return (
    <button aria-label={label} className={`flex h-full shrink-0 items-center justify-center ${w} ${sep ? 'border-l border-[#858585]' : ''}`}>
      {children}
    </button>
  );
}
const Drop = () => <St label="Список" w="w-4"><Caret big /></St>;
const G = '#b9b9b9';
const B = '#2f8cf0';

const Person = ({ color, children }: { color: string; children?: ReactNode }) => (
  <Svg><path d="M7 1h2l1 6 6 8h-4l-4-5-4 5H0l6-8z" fill={color} />{children}</Svg>
);
const CubeIcon = ({ children }: { children?: ReactNode }) => (
  <Svg><path d="M2.500 5L8.500 2l5.500 3v7l-5.500 3-6-3zM2.500 5l6 3 5.500-3M8.500 8v7" stroke={G} />{children}</Svg>
);

function StatusBar() {
  return (
    <div className="flex h-[29px] shrink-0 items-start justify-between bg-[#383838] text-[#f5f5f5]">
      <div className="flex h-[18px] pl-3 text-[#b5b5b5]">
        <button className="w-[69px] bg-linear-to-b from-[#5b5b5b] to-[#858585] font-bold text-white [clip-path:polygon(0_0,100%_0,88%_100%,12%_100%)]">Модель</button>
        <button className="w-[54px] bg-[#575757] [clip-path:polygon(0_0,100%_0,88%_100%,12%_100%)]">Лист1</button>
        <button className="ml-0.5 w-[54px] bg-[#575757] [clip-path:polygon(0_0,100%_0,88%_100%,12%_100%)]">Лист2</button>
        <button aria-label="Новый лист" className="ml-0.5 flex w-6 items-center justify-center bg-[#484848] [clip-path:polygon(0_0,100%_0,88%_100%,12%_100%)]"><Svg s={8}><path d="M4 1v6M1 4h6" stroke="#bbb" strokeWidth="1.500" /></Svg></button>
      </div>
      <div className="flex h-[27px] items-center border-y border-[#858585] bg-[#4f4f4f]">
        <div className="flex h-full w-[212px] items-center justify-end whitespace-nowrap border-l border-[#858585] pr-1">-13513.3939, -5945.7284, 0.0000</div>
        <St label="Модель" w="w-[60px]" sep>МОДЕЛЬ</St>
        <St label="Сетка" sep><Svg><path d="M2.500 1v14M5.500 1v14M8.500 1v14M11.500 1v14M14.500 1v14M1 3.500h15M1 8.500h15M1 13.500h15" stroke={G} strokeDasharray="2 1" /></Svg></St>
        <St label="Шаг" w="w-6"><Svg><path d="M1 1.500h14M1 5.500h14M1 9.500h14M1 13.500h14" stroke={G} strokeDasharray="1 2" /></Svg></St>
        <Drop />
        <St label="Зависимости" sep><Svg><path d="M4 9h5v6H4z" fill={G} /><path d="M8.500 12V1.500h5v4h-4" stroke={G} strokeWidth="1.300" /></Svg></St>
        <St label="Динамический ввод" sep><Svg s={18}><path d="M4.500 1v9M0 5.500h9M8.500 14v-3" stroke={B} strokeDasharray="2 1" /><path d="M8 11h9v5H8z" fill={B} /><path d="M5 13h4v3H5z" fill={B} /></Svg></St>
        <St label="Орто" sep><Svg><path d="M2.500 1v13.500H15" stroke={B} strokeWidth="2" /><path d="M3 9h4v5" stroke={B} /></Svg></St>
        <St label="Полярное отслеживание" w="w-[22px]"><Svg><circle cx="7.500" cy="8.500" r="6" stroke={G} strokeWidth="1.300" /><path d="M7.500 8.500H16M7.500 8.500l5-7" stroke={G} /></Svg></St>
        <Drop />
        <St label="Изометрия" w="w-[22px]"><Svg s={18}><path d="M1 1l15 16M9.500 0v18" stroke={G} strokeWidth="1.200" /></Svg></St>
        <Drop />
        <St label="Объектное отслеживание" sep><Svg><path d="M13 2L2 14.500h14" stroke={G} strokeWidth="1.300" /><path d="M6 8l4 2v4" stroke="#999" /></Svg></St>
        <St label="Объектная привязка" w="w-[22px]"><Svg><path d="M3.500 2.500h11v12h-11z" stroke={B} strokeWidth="1.500" /><path d="M1 2h5v5H1z" fill="#1fae3c" stroke="#0a3" /></Svg></St>
        <Drop />
        <St label="Вес линий" w="w-6" sep><Svg s={18}><path d="M1 3.500h16" stroke={B} strokeWidth="2" /><path d="M1 8h12M1 12h16" stroke={B} strokeWidth="2.500" /><path d="M1 16h11" stroke={B} strokeWidth="3" /></Svg></St>
        <Drop />
        <St label="Прозрачность" sep>
          <Svg>
            <defs><pattern id="chk" width="4" height="4" patternUnits="userSpaceOnUse"><path d="M0 0h2v2H0zM2 2h2v2H2z" fill="#ccc" /></pattern></defs>
            <rect x="1.500" y="1.500" width="13" height="13" fill="url(#chk)" stroke="#ccc" />
          </Svg>
        </St>
        <St label="Циклический выбор" sep><Svg><path d="M3.500 0v7M0 3.500h7" stroke={G} /><path d="M5.500 4.500h8v8" stroke={G} /><path d="M7 7h8v8H7z" fill="#9fc48c" /></Svg></St>
        <St label="3D-привязка" w="w-[22px]" sep><CubeIcon><path d="M0 1h5v5H0z" fill="#17b04a" stroke="#0b3" /></CubeIcon></St>
        <Drop />
        <St label="Динамическая ПСК" sep><Svg><path d="M2.500 1v12.500H14M2.500 13.500L10 6M11 2.500l4-1-2 6M0 4l2.500-3L5 4M12 11l3 2.500-3 2.500" stroke={G} strokeWidth="1.200" /></Svg></St>
        <St label="Фильтр подобъектов"><CubeIcon /></St>
        <Drop />
        <St label="Гизмо" w="w-[22px]"><Svg><circle cx="8" cy="8" r="6.500" stroke="#8a80b0" /><ellipse cx="8" cy="8" rx="3" ry="6.500" stroke="#8cb08c" /><path d="M8 8l6 5" stroke="#c03a3a" strokeWidth="1.500" /></Svg></St>
        <Drop />
        <St label="Видимость аннотаций" sep><Person color={B}><circle cx="12" cy="4" r="3" stroke={B} /></Person></St>
        <St label="Автомасштаб"><Person color={G}><path d="M12 0l-2 4h3l-2 4 5-5h-3l2-3z" fill={G} /></Person></St>
        <St label="Масштаб аннотаций" w="w-[22px]"><Person color={G} /></St>
        <St label="Масштаб" w="w-[74px]"><span className="mr-1 whitespace-nowrap">1:100 / 1%</span><Caret big /></St>
        <St label="Рабочее пространство" sep>
          <Svg><circle cx="8" cy="8" r="4" stroke={G} strokeWidth="3" /><path d="M8 1v3M8 12v3M1 8h3M12 8h3M3 3l2 2M11 11l2 2M13 3l-2 2M5 11l-2 2" stroke={G} strokeWidth="2" /></Svg>
        </St>
        <Drop />
        <St label="Монитор аннотаций" sep><Svg><path d="M8 1v14M1 8h14" stroke={G} strokeWidth="2" /></Svg></St>
        <St label="Линейка" w="w-6" sep><Svg><path d="M6 1h5v14H6z" fill={G} /><path d="M9 3.500h2M9 6.500h2M9 9.500h2M9 12.500h2" stroke="#4f4f4f" /></Svg></St>
        <St label="Единицы" w="w-[90px]"><span className="mr-1 whitespace-nowrap">Десятичные</span><Caret big /></St>
        <St label="Быстрые свойства" w="w-6" sep><Svg><path d="M4.500 2.500h8v12h-8z" stroke={G} /><path d="M4 3.500h9M6 6.500h5M6 8.500h5M6 10.500h5M6 12.500h5" stroke={G} strokeDasharray="2 1" /></Svg></St>
        <St label="Аппаратное ускорение" w="w-7" sep><Svg s={18}><circle cx="9" cy="9" r="8.500" fill="#1d6fc8" /><circle cx="9" cy="9" r="5" stroke="#11539c" strokeWidth="1.500" /><path d="M7 9l2 2 4-4" stroke="#5aa8f5" strokeWidth="1.500" /></Svg></St>
        <St label="Доверенный файл" w="w-6" sep><Svg><path d="M2 1h8l4 4v7H2z" fill="#dfe9f5" /><path d="M4 3h4v3H4zM9 6h3v3H9z" fill="#3a78c0" /><path d="M1 8l5 2 3 5-6 0z" fill="#ead33a" /><path d="M8 12l3 3 5-6" stroke="#ffe43a" strokeWidth="2" /></Svg></St>
        <St label="Изолировать объекты" w="w-6"><Svg><path d="M.5 1.500h7v6h-7z" stroke={G} strokeWidth="1.200" /><circle cx="12" cy="7" r="3" stroke={G} strokeWidth="1.200" /><path d="M7 9.500l3 5.500H4z" stroke={G} strokeWidth="1.200" /></Svg></St>
        <St label="Очистить экран" w="w-7" sep><Svg><path d="M.5 2.500h15v11H.5z" stroke="#ccc" strokeWidth="1.300" /><path d="M7 11H3.500V7.500M9 5h3.500v3.500M3.500 11L7 8M12.500 5L9.500 8" stroke="#ccc" strokeWidth="1.300" /></Svg></St>
        <St label="Адаптация"><Svg><path d="M0 3h16M0 8h16M0 13h16" stroke="#ccc" strokeWidth="1.800" /></Svg></St>
      </div>
    </div>
  );
}

/* ---------- windows taskbar ---------- */

const WinLogo = ({ s }: { s: number }) => (
  <Svg s={s} vb="0 0 26 26"><path d="M0 4l11-2v10.500H0zM12 2l14-2v12.500H12zM0 13.500h11V24L0 22zM12 13.500h14V26l-14-2z" fill="#fff" /></Svg>
);

function Taskbar() {
  return (
    <footer className="flex h-10 shrink-0 items-center bg-[linear-gradient(90deg,#a47f98_0%,#9f7a92_40%,#a07a94_87%,#9c4460_88%,#9c4460_89%,#a5809a_91%,#a07c95_100%)] text-white">
      <button aria-label="Пуск" className="flex w-12 justify-center"><WinLogo s={26} /></button>
      <button aria-label="Проводник" className="ml-1 flex w-[58px] justify-center">
        <Svg s={32}>
          <path d="M1 3h10l2 3h17v22H1z" fill="#e9d67a" />
          <path d="M3 6h26v20H3z" fill="#f8efb2" />
          <path d="M4 3h5M14 5h5M22 7h4" stroke="#3a9a4a" strokeWidth="2" />
          <path d="M1 12h30v16H1z" fill="#f3e596" />
          <path d="M6 19h20v11h-5v-6h-10v6H6z" fill="#8fd3ec" stroke="#4aa6cc" />
        </Svg>
      </button>
      <button aria-label="Google Chrome" className="ml-1 flex h-[38px] w-[58px] items-center justify-center border border-[#cdb8c8] bg-[#b293a8]">
        <Svg s={28}>
          <circle cx="14" cy="14" r="13.500" fill="#f2c92c" />
          <path d="M14 14L2.300 7.300A13.500 13.500 0 0 1 25.700 7.300H14z" fill="#d8392b" />
          <path d="M14 14l-5 13A13.500 13.500 0 0 1 2.300 7.300L8.500 17z" fill="#3fa64a" />
          <path d="M9 17l5 3.500-2 7A13.500 13.500 0 0 1 3 22z" fill="#3fa64a" />
          <circle cx="14" cy="14" r="6.500" fill="#f4f4f4" />
          <circle cx="14" cy="14" r="5" fill="#3f7fc6" />
        </Svg>
      </button>
      <button aria-label="Camtasia" className="ml-1 flex h-[38px] w-[58px] items-center justify-center border border-[#cdb8c8] bg-[#b293a8]">
        <Svg s={32}>
          <path d="M0 0h32v28H0z" fill="#fff" />
          <path d="M0 28h32v4H3z" fill="#2f6a1c" />
          <path d="M23 9V6h-9l-4 4v12l4 4h9v-4" stroke="#1d2a14" strokeWidth="4" />
          <path d="M10 9v13l4 4" stroke="#6cae36" strokeWidth="4" />
        </Svg>
      </button>
      <button aria-label="AutoCAD" className="ml-1 flex h-[38px] w-[58px] items-center justify-center border border-white bg-[#c6afc0]">
        <Svg s={32}>
          <path d="M0 0h32v32H0z" fill="#f3e4ea" />
          <path d="M0 24h32v8H0z" fill="#e6b3bf" />
          <path d="M13 3h6l7 20-7-1c-2-2-4-2-6 0l-7 2z" fill="#bd1530" />
          <path d="M13 3l-7 21 4-1 6-12z" fill="#8c0c22" />
        </Svg>
      </button>

      <div className="ml-auto flex items-center">
        <button aria-label="Скрытые значки" className="w-7 pl-2.5"><Svg s={8}><path d="M0 6h8L4 2z" fill="#fff" /></Svg></button>
        <button aria-label="Центр поддержки" className="flex w-6 justify-center"><Svg><path d="M1.500 0v16" stroke="#fff" strokeWidth="1.500" /><path d="M3 2c4 2 5-1 7 1h5l-2 3 2 3c-3 1-5 0-7-1s-3 0-5 0z" fill="#fff" /></Svg></button>
        <button aria-label="Windows" className="flex w-6 justify-center"><WinLogo s={15} /></button>
        <button aria-label="Информация" className="flex w-6 justify-center"><Svg><circle cx="8" cy="8" r="8" fill="#f0a21c" /><path d="M8 6.500V13" stroke="#fff" strokeWidth="2.400" /><circle cx="8" cy="4" r="1.400" fill="#fff" /></Svg></button>
        <button aria-label="Сеть" className="flex w-6 justify-center"><Svg><path d="M5.500 4.500h10v7h-10zM10.500 12v2.500M7 14.500h7" stroke="#fff" strokeWidth="1.200" /><path d="M.5 1.500h4v4h-4zM2.500 6v8.500H6" fill="none" stroke="#fff" strokeWidth="1.200" /></Svg></button>
        <button aria-label="Громкость" className="flex w-6 justify-center"><Svg><path d="M0 5h3l4-4v14l-4-4H0z" fill="#fff" /><path d="M9 5.500c1 1 1 4 0 5M11 3.500c2 2 2 7 0 9M13 1.500c3 3 3 10 0 13" stroke="#fff" strokeWidth="1.100" /></Svg></button>
        <button className="w-11 text-center">РУС</button>
        <button className="w-[66px] pr-px text-center leading-[17px]">
          17:06
          <br />
          18.08.2015
        </button>
        <span className="w-3" />
      </div>
    </footer>
  );
}

export default function App() {
  return (
    <div className="flex h-screen w-full flex-col overflow-hidden bg-[#383838] font-['Open_Sans','Noto_Sans',sans-serif] text-xs">
      <TitleBar />
      <Ribbon />
      <div className="flex h-[29px] shrink-0 items-end border-b-4 border-[#5c5c5c] bg-[#383837] pl-5">
        <button className="flex h-[22px] w-[130px] items-center justify-between bg-linear-to-b from-[#737373] to-[#5c5c5c] pl-3 pr-4 pt-px text-[11px] text-[#eee] [clip-path:polygon(0_100%,4%_10%,7%_0,92%_0,95%_10%,100%_100%)]">
          Чертеж8*
          <Caret color="#4a4a4a" />
        </button>
        <button aria-label="Новый чертеж" className="mb-1 ml-0.5 flex h-4 w-[22px] items-center justify-center rounded bg-[#4d4d4d]">
          <Svg s={8}><path d="M4 1v6M1 4h6" stroke="#aaa" strokeWidth="1.500" /></Svg>
        </button>
      </div>
      <Canvas />
      <CommandLine />
      <StatusBar />
      <Taskbar />
    </div>
  );
}
